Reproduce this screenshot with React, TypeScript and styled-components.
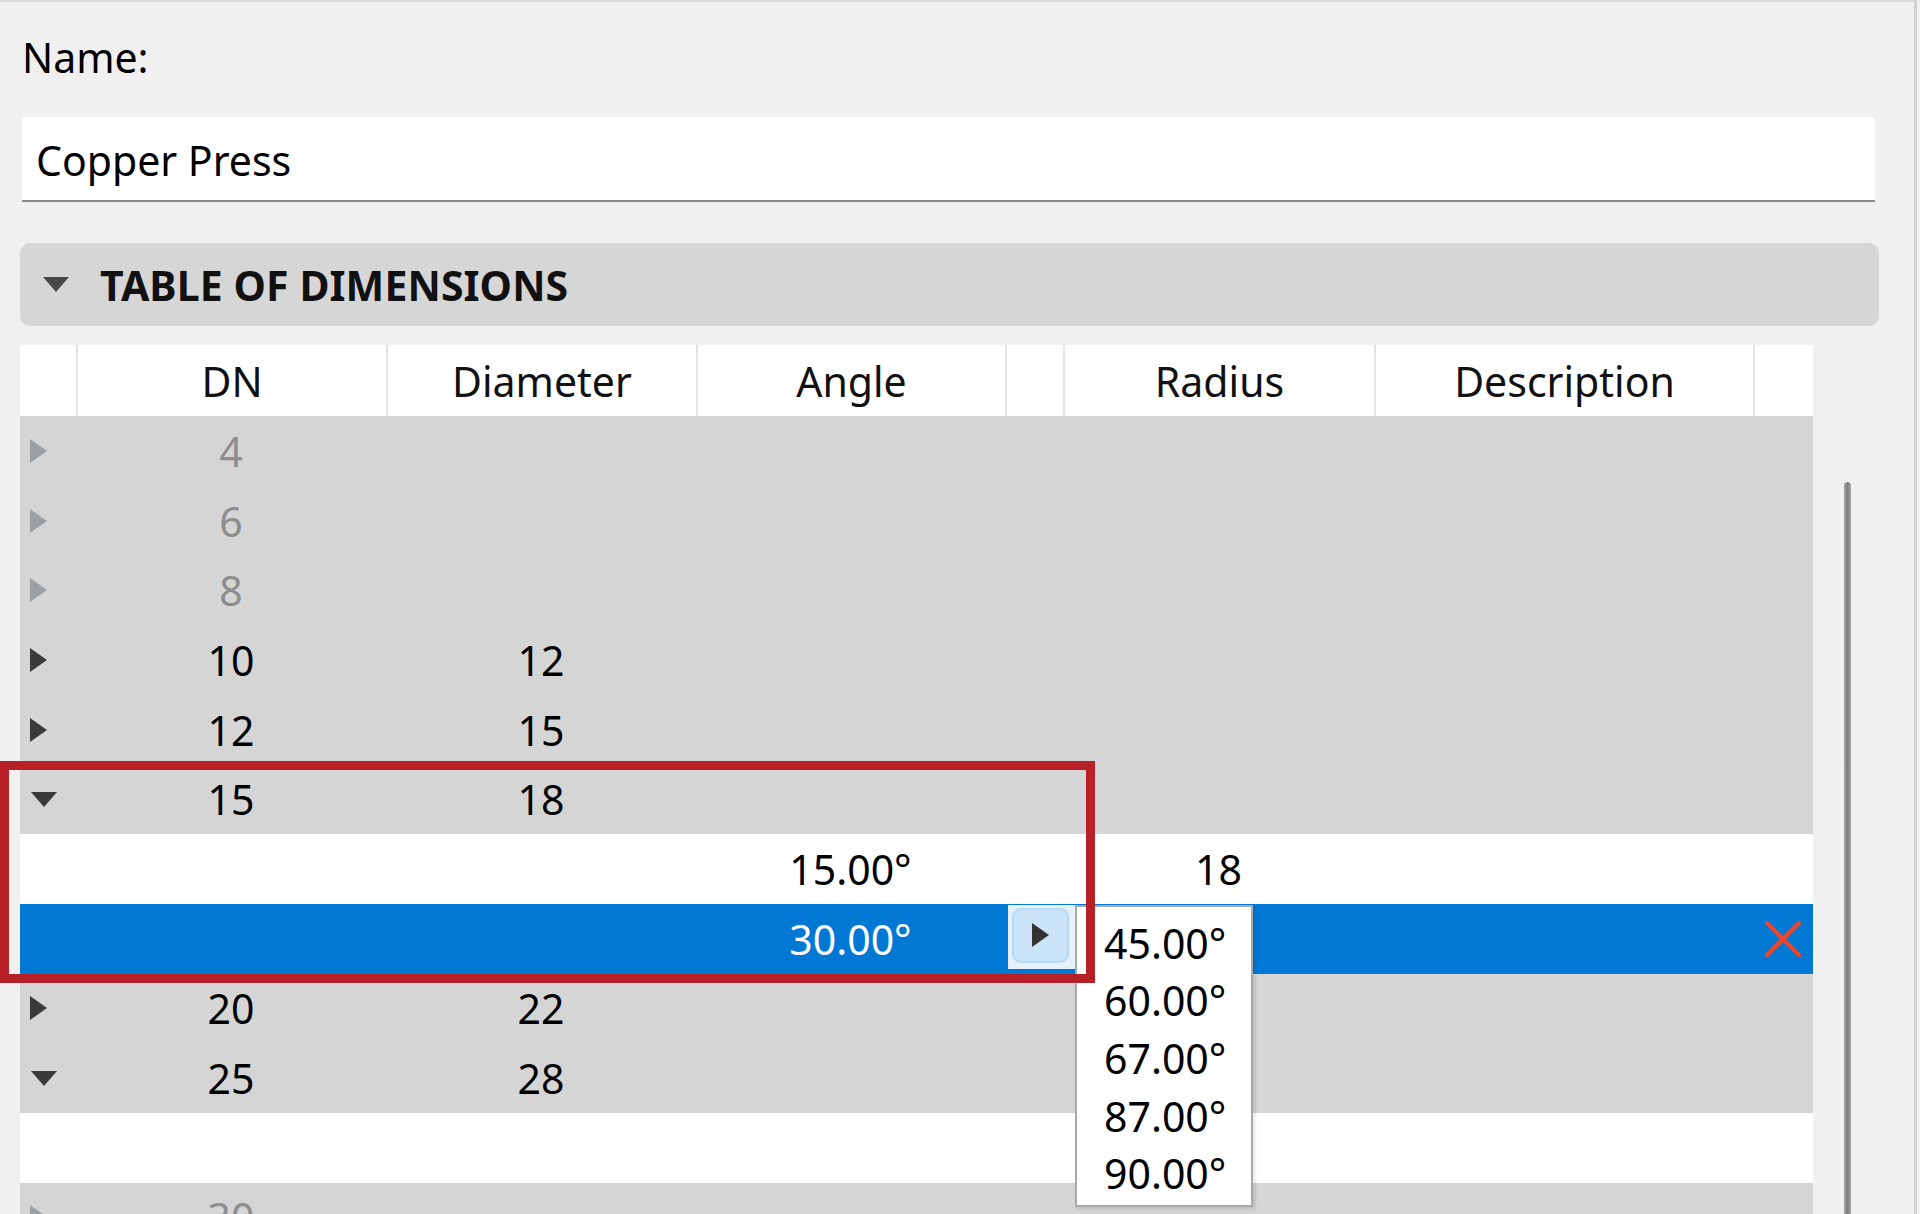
import React from 'react';
import styled, { createGlobalStyle } from 'styled-components';

const COLS = '56px 310px 310px 309px 58px 311px 379px 60px';
const ROW_H = 69.7;

const GlobalStyle = createGlobalStyle`
  html, body {
    margin: 0;
    padding: 0;
    background: #f0f0f0;
  }
  body {
    font-family: 'Noto Sans', 'Open Sans', sans-serif;
    color: #000;
  }
`;

const Frame = styled.div`
  position: relative;
  width: 1917px;
  height: 1214px;
  box-sizing: border-box;
  border-top: 2px solid #d9d9d9;
  border-right: 3px solid #d2d2d2;
  padding: 35px 0 0 20px;
  overflow: hidden;
  display: flex;
  flex-direction: column;

  & > * {
    flex-shrink: 0;
  }
`;

const Label = styled.div`
  margin-left: 2px;
  font-size: 41px;
  line-height: 40px;
  height: 40px;
`;

const NameInput = styled.div`
  margin: 40px 0 0 2px;
  width: 1853px;
  height: 85px;
  box-sizing: border-box;
  background: #fff;
  border-bottom: 2px solid #8a8a8a;
  border-radius: 3px 3px 0 0;
  padding: 2px 0 0 14px;
  display: flex;
  align-items: center;
  font-size: 41px;
`;

const SectionHeader = styled.div`
  margin-top: 41px;
  width: 1859px;
  height: 83px;
  border-radius: 10px;
  background: #d6d6d6;
  display: flex;
  align-items: center;
  padding-left: 23px;
  box-sizing: border-box;
  gap: 31px;
`;

const SectionTitle = styled.span`
  font-size: 41px;
  font-weight: 700;
  color: #111;
  letter-spacing: 0.1px;
`;

const TableArea = styled.div`
  margin-top: 19px;
  display: flex;
  align-items: stretch;
`;

const Table = styled.div`
  width: 1793px;
  display: flex;
  flex-direction: column;
`;

const HeadRow = styled.div`
  display: grid;
  grid-template-columns: ${COLS};
  height: 71px;
  background: #fff;
`;

const HeadCell = styled.div<{ $first?: boolean }>`
  display: flex;
  align-items: center;
  justify-content: center;
  font-size: 41px;
  color: #111;
  border-left: ${p => (p.$first ? 'none' : '2px solid #e4e4e4')};
`;

type Tone = 'group' | 'child' | 'selected';

const BodyRow = styled.div<{ $tone: Tone }>`
  position: relative;
  display: grid;
  grid-template-columns: ${COLS};
  height: ${ROW_H}px;
  flex-shrink: 0;
  background: ${p =>
    p.$tone === 'group' ? '#d5d5d5' : p.$tone === 'selected' ? '#0078d4' : '#ffffff'};
  color: ${p => (p.$tone === 'selected' ? '#fff' : '#000')};
`;

const Cell = styled.div<{ $muted?: boolean }>`
  display: flex;
  align-items: center;
  justify-content: center;
  font-size: 41px;
  color: ${p => (p.$muted ? '#8d8d8d' : 'inherit')};
`;

const ArrowCell = styled.div<{ $open?: boolean }>`
  display: flex;
  align-items: center;
  padding-left: ${p => (p.$open ? 11 : 10)}px;
`;

const Editor = styled.div`
  position: absolute;
  left: 988px;
  top: 1px;
  width: 67px;
  height: 64px;
  background: #e6f0fa;
  box-sizing: border-box;
  padding: 3px 6px 6px 4px;
`;

const EditorButton = styled.div`
  width: 100%;
  height: 100%;
  box-sizing: border-box;
  border: 2px solid #b4d8f7;
  border-radius: 9px;
  background: #cce4f7;
  display: flex;
  align-items: center;
  justify-content: center;
`;

const Popup = styled.div`
  position: absolute;
  left: 1055px;
  top: 1px;
  width: 178px;
  height: 302px;
  box-sizing: border-box;
  border: 2px solid #a9a9a9;
  background: #fff;
  padding-top: 7px;
  box-shadow: 2px 2px 3px rgba(0, 0, 0, 0.12);
  z-index: 5;
`;

const Option = styled.div`
  height: 57.7px;
  display: flex;
  align-items: center;
  padding-left: 27px;
  font-size: 41px;
  color: #000;
`;

const ScrollTrack = styled.div`
  width: 67px;
  padding: 137px 0 0 31px;
  box-sizing: border-box;
  display: flex;
  flex-direction: column;
`;

const ScrollThumb = styled.div`
  width: 7px;
  flex: 1;
  border-radius: 4px 4px 0 0;
  background: linear-gradient(90deg, #a8a8a8, #7d7d7d 50%, #a8a8a8);
`;

const Highlight = styled.div`
  position: absolute;
  left: 0;
  top: 759px;
  width: 1095px;
  height: 222px;
  box-sizing: border-box;
  border: 9px solid #b52126;
  z-index: 10;
  pointer-events: none;
`;

const RightTri = ({ color }: { color: string }) => (
  <svg width="17" height="24" viewBox="0 0 17 24">
    <polygon points="0,0 17,12 0,24" fill={color} />
  </svg>
);

const DownTri = ({ color }: { color: string }) => (
  <svg width="26" height="15" viewBox="0 0 26 15">
    <polygon points="0,0 26,0 13,15" fill={color} />
  </svg>
);

const CloseX = () => (
  <svg width="36" height="36" viewBox="0 0 36 36">
    <path d="M2 2 L34 34 M34 2 L2 34" stroke="#e8472e" strokeWidth="4.5" strokeLinecap="round" />
  </svg>
);

type Row =
  | { kind: 'group'; dn: string; dia?: string; open?: boolean; disabled?: boolean }
  | { kind: 'child'; angle?: string; radius?: string; selected?: boolean };

const rows: Row[] = [
  { kind: 'group', dn: '4', disabled: true },
  { kind: 'group', dn: '6', disabled: true },
  { kind: 'group', dn: '8', disabled: true },
  { kind: 'group', dn: '10', dia: '12' },
  { kind: 'group', dn: '12', dia: '15' },
  { kind: 'group', dn: '15', dia: '18', open: true },
  { kind: 'child', angle: '15.00°', radius: '18' },
  { kind: 'child', angle: '30.00°', selected: true },
  { kind: 'group', dn: '20', dia: '22' },
  { kind: 'group', dn: '25', dia: '28', open: true },
  { kind: 'child' },
  { kind: 'group', dn: '30', disabled: true },
];

const options = ['45.00°', '60.00°', '67.00°', '87.00°', '90.00°'];
const headers = ['', 'DN', 'Diameter', 'Angle', '', 'Radius', 'Description', ''];

function renderRow(row: Row, i: number) {
  if (row.kind === 'group') {
    const arrowColor = row.disabled ? '#9ba0a5' : '#3a3a3a';
    return (
      <BodyRow key={i} $tone="group">
        <ArrowCell $open={row.open}>
          {row.open ? <DownTri color={arrowColor} /> : <RightTri color={arrowColor} />}
        </ArrowCell>
        <Cell $muted={row.disabled}>{row.dn}</Cell>
        <Cell>{row.dia}</Cell>
        <Cell />
        <Cell />
        <Cell />
        <Cell />
        <Cell />
      </BodyRow>
    );
  }
  return (
    <BodyRow key={i} $tone={row.selected ? 'selected' : 'child'}>
      <Cell />
      <Cell />
      <Cell />
      <Cell>{row.angle}</Cell>
      <Cell />
      <Cell>{row.radius}</Cell>
      <Cell />
      <Cell>{row.selected && <CloseX />}</Cell>
      {row.selected && (
        <>
          <Editor>
            <EditorButton>
              <RightTri color="#333" />
            </EditorButton>
          </Editor>
          <Popup>
            {options.map(o => (
              <Option key={o}>{o}</Option>
            ))}
          </Popup>
        </>
      )}
    </BodyRow>
  );
}

export default function App() {
  return (
    <>
      <GlobalStyle />
      <Frame>
        <Label>Name:</Label>
        <NameInput>Copper Press</NameInput>
        <SectionHeader>
          <DownTri color="#4a4a4a" />
          <SectionTitle>TABLE OF DIMENSIONS</SectionTitle>
        </SectionHeader>
        <TableArea>
          <Table>
            <HeadRow>
              {headers.map((h, i) => (
                <HeadCell key={i} $first={i === 0}>
                  {h}
                </HeadCell>
              ))}
            </HeadRow>
            {rows.map(renderRow)}
          </Table>
          <ScrollTrack>
            <ScrollThumb />
          </ScrollTrack>
        </TableArea>
        <Highlight />
      </Frame>
    </>
  );
}
